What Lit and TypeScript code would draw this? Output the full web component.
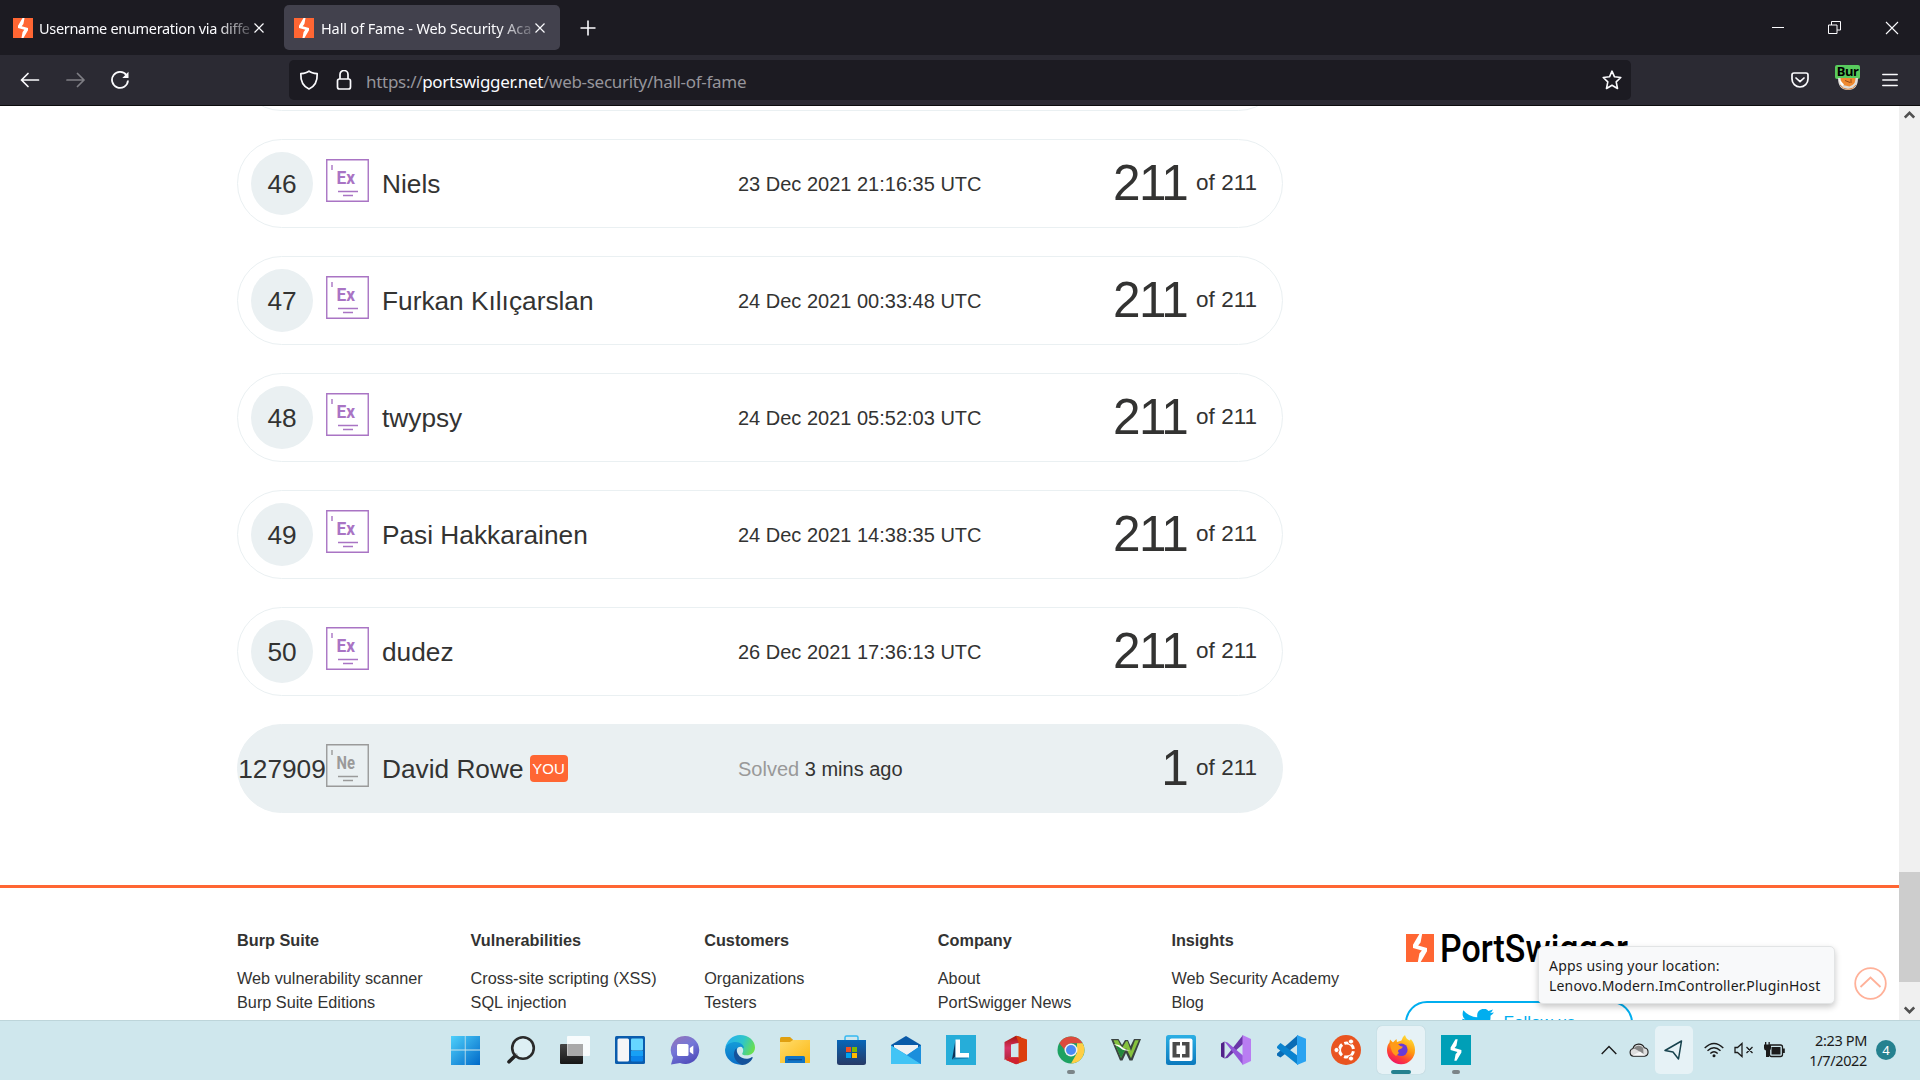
import { LitElement, html, css, svg, nothing } from "lit";
import { customElement, property } from "lit/decorators.js";

interface Entry { rank: string; level: string; name: string; date?: string; ago?: string; score: string; you?: boolean; }

const ENTRIES: Entry[] = [
  { rank: "46", level: "Ex", name: "Niels", date: "23 Dec 2021 21:16:35 UTC", score: "211" },
  { rank: "47", level: "Ex", name: "Furkan Kılıçarslan", date: "24 Dec 2021 00:33:48 UTC", score: "211" },
  { rank: "48", level: "Ex", name: "twypsy", date: "24 Dec 2021 05:52:03 UTC", score: "211" },
  { rank: "49", level: "Ex", name: "Pasi Hakkarainen", date: "24 Dec 2021 14:38:35 UTC", score: "211" },
  { rank: "50", level: "Ex", name: "dudez", date: "26 Dec 2021 17:36:13 UTC", score: "211" },
  { rank: "127909", level: "Ne", name: "David Rowe", ago: "3 mins ago", score: "1", you: true },
];

const FOOTER = [
  { title: "Burp Suite", links: ["Web vulnerability scanner", "Burp Suite Editions"] },
  { title: "Vulnerabilities", links: ["Cross-site scripting (XSS)", "SQL injection"] },
  { title: "Customers", links: ["Organizations", "Testers"] },
  { title: "Company", links: ["About", "PortSwigger News"] },
  { title: "Insights", links: ["Web Security Academy", "Blog"] },
];

// PortSwigger mark on a 30-unit square; inset shrinks the bolt inside the tile
const bolt = (bg: string, size: number, inset = false) => html`<svg width=${size} height=${size} viewBox="0 0 30 30">
  <rect width="30" height="30" fill=${bg}></rect>
  <path transform=${inset ? "translate(4.200 4.200) scale(.72)" : "scale(1)"} d="M14.300 0H17.300L15.600 9 13 12.200 22.500 15V18.500L15.700 30H12.700L14.400 21 17 17.800 7.500 15V11.500Z" fill="#fff"></path></svg>`;

const appIcons = {
  start: svg`<defs><linearGradient id="a" x1="0" y1="0" x2="1" y2="1"><stop offset="0" stop-color="#4fd0fb"/><stop offset="1" stop-color="#0069c8"/></linearGradient></defs>
    <path d="M1 2h13.8v13.6H1zM15.600 2H30v13.600H15.600zM1 16.600h13.800V31H1zM15.600 16.600H30V31H15.600z" transform="translate(0 -1)" fill="url(#a)"/>`,
  search: svg`<path d="M11 20 4 26.800" stroke="#222" stroke-width="3.600" stroke-linecap="round"/><circle cx="18" cy="13" r="10.800" fill="#e3f2f6" fill-opacity=".7" stroke="#2a2a2a" stroke-width="2.600"/>`,
  task: svg`<defs><linearGradient id="a" x1="0" y1="0" x2="0" y2="1"><stop offset="0" stop-color="#454545"/><stop offset="1" stop-color="#161616"/></linearGradient></defs>
    <rect x="0" y="9" width="23" height="20" rx="1" fill="url(#a)"/><rect x="7" y="1" width="23" height="20" rx="1" fill="#fff" fill-opacity=".85"/><rect x="7.500" y="9" width="15.500" height="12" fill="#a9a9a9"/>`,
  widgets: svg`<rect y="1" width="30" height="28" rx="1.500" fill="#0a5cad"/><rect x="2.500" y="3.500" width="11.500" height="23" rx="1.500" fill="#f5f5f7"/><rect x="16" y="3.500" width="12" height="12" rx="1" fill="#66d6ff"/><rect x="16" y="16" width="12" height="5" fill="#17a0f5"/><rect x="16" y="21" width="12" height="5.500" rx="1" fill="#0a84ea"/>`,
  chat: svg`<defs><linearGradient id="a" x1="0" y1="0" x2=".5" y2="1"><stop offset="0" stop-color="#9873b5"/><stop offset=".5" stop-color="#7477d8"/><stop offset="1" stop-color="#5350bd"/></linearGradient></defs>
    <path d="M15 1a14 14 0 1 1-5 27l-9 1.500 2-7A14 14 0 0 1 15 1z" fill="url(#a)"/><rect x="7" y="9" width="11.500" height="12" rx="1.500" fill="#fff"/><path d="M19.800 13l3.500-2.500v9L19.800 17z" fill="#fff"/>`,
  edge: svg`<defs><linearGradient id="a" x1="0" y1=".3" x2="1" y2=".6"><stop offset="0" stop-color="#25aff0"/><stop offset=".55" stop-color="#2fc5c9"/><stop offset="1" stop-color="#6be04a"/></linearGradient><linearGradient id="b" x1="0" y1="0" x2="0" y2="1"><stop offset="0" stop-color="#149bd8"/><stop offset="1" stop-color="#0a6fc8"/></linearGradient></defs>
    <path d="M.3 12.500C2 5 8 0 15 0c9 0 15 6 15 12.500 0 5-4 7.800-8.500 7.800-3 0-5-.8-4-2.300 1.600-2.500.5-6.500-3.500-7.500C9 8.800 3 9.500.3 12.500z" fill="url(#a)"/>
    <path d="M0 15C.5 9 6 7 10.500 7c5 0 8.500 3 8.500 6.500-1.500-2-4-2.500-6-1-3 3-1 10 5 13.500 2 1.200 3 2 2 3C10 32 0 24.500 0 15z" fill="url(#b)"/>
    <path d="M11.500 13c-5 5-2.500 14 5.500 17 5-.2 8.500-3 10.500-6.800.4-1-.2-1.500-.9-1-3 1.800-6.500 2-9.600.6C13.500 21 11.300 17.500 11.500 13z" fill="#14529b"/>`,
  explorer: svg`<path d="M0 3.500Q0 2 1.500 2H10l3 2.700V12H0z" fill="#e0a010"/><defs><linearGradient id="a" x1="0" y1="0" x2="1" y2="1"><stop offset="0" stop-color="#ffdc6b"/><stop offset="1" stop-color="#fcb813"/></linearGradient></defs><path d="M0 7h10l3-2h17v22.500Q30 28 29 28H0z" fill="url(#a)"/><path d="M5 28v-5.500Q5 21 6.500 21h17Q25 21 25 22.500V28z" fill="#1074c6"/><rect x="8" y="24" width="14" height="1.300" fill="#0c4d91"/>`,
  store: svg`<path d="M9 6V2.500Q9 1 10.500 1h10Q22 1 22 2.500V6" fill="none" stroke="#35b9f1" stroke-width="1.500"/><defs><linearGradient id="a" x1="0" y1="0" x2="0" y2="1"><stop offset="0" stop-color="#0766b8"/><stop offset="1" stop-color="#273a66"/></linearGradient></defs><path d="M1 5h29v22.500Q30 30 27.500 30h-24Q1 30 1 27.500z" fill="url(#a)"/><path d="M10 12h5v5h-5z" fill="#f25022"/><path d="M16 12h5v5h-5z" fill="#7fba00"/><path d="M10 18h5v5h-5z" fill="#00a4ef"/><path d="M16 18h5v5h-5z" fill="#ffb900"/>`,
  mail: svg`<path d="M0 10 15 1l15 9v4H0z" fill="#0a5aa8"/><path d="M3 10h24v8L15 22 3 17z" fill="#eff1f4"/><path d="M0 10.500 16 20l14-9.500V29H0z" fill="#27a3e8"/><path d="M0 10.500 30 29H0z" fill="#42c4f5"/><path d="M16 20 30 10.500V29z" fill="#1c8fdc"/>`,
  lenovo: svg`<rect width="30" height="30" fill="#26add9"/><path d="M9.500 5 6 24.500 9.500 22z" fill="#0b3157"/><path d="M6 24.500 9 21.500H22v2z" fill="#157fb0"/><path d="M9.500 4.500H14V18h9v4.500H9.500z" fill="#fff"/>`,
  office: svg`<defs><linearGradient id="a" x1="0" y1="0" x2="0" y2="1"><stop offset="0" stop-color="#a5150c"/><stop offset=".5" stop-color="#d83366"/><stop offset="1" stop-color="#b3283f"/></linearGradient></defs><path d="M3.500 7 15 .8 20 2v5.500l-10 2V22L3.500 25z" fill="url(#a)"/><path d="M15 .8 26 4.500v21L15 29.300 5 25l3-2.500h9.500v-15z" fill="#dc3e0c"/><path d="M4.500 24.800 8 22.300h9.500l.5 6-3 1z" fill="#cf2130"/>`,
  chrome: svg`<circle cx="15" cy="15" r="13.500" fill="#1da262"/><path d="M3.300 8.200A13.500 13.500 0 0 1 26.700 8.300H15Q10 9 8.800 15z" fill="#dc4a3d"/><path d="M26.700 8.300A13.500 13.500 0 0 1 15 28.500L21 18V8.300z" fill="#ffce44"/><circle cx="15" cy="15" r="6.500" fill="#f1f1f1"/><circle cx="15" cy="15" r="5" fill="#4a8af4"/>`,
  w: svg`<path d="M0 4h7.500l3.500 6 3-5h3l2.500 6L23 4h7L21.500 25.500h-3L15 18l-3.500 7.500H9z" fill="#3a4441"/><path d="M2.500 5.300H7l4 8 4-7h1.500L20 16l4-10.700h3.800L20 23.300 15 13l-5 10z" fill="#86c23e"/><path d="M5 11q5 .5 7.500 3.500L14 15l-4 8z" fill="#22883e"/><path d="M2.500 9.300q6 .2 8.500 2.700t8.500 3.500q-7 .5-9.500-2T2.500 9.300z" fill="#fff"/>`,
  brackets: svg`<defs><linearGradient id="a" x1="0" y1="0" x2="0" y2="1"><stop offset="0" stop-color="#2cafe4"/><stop offset="1" stop-color="#0b79bd"/></linearGradient></defs><rect width="30" height="30" rx="2.500" fill="url(#a)"/><rect x="3.500" y="3.500" width="23" height="22.500" rx="2" fill="#fff"/><path d="M6.500 7H14v3.500h-3.500v8.500H14v3.500H6.500zM23.500 7H16v3.500h3.500v8.500H16v3.500h7.500z" fill="#4a4a4a"/>`,
  vs: svg`<path d="M0 8.500 3.500 6.500v17L0 21.500z" fill="#52218a"/><path d="M3.500 23.500 22 0v9L6.500 23z" fill="#6a35a8"/><path d="M3.500 6.500 6.500 7.500 22 20.500V30z" fill="#9256d8"/><path d="M21.500 0 30 4v22l-8.500 4z" fill="#b97df2"/>`,
  code: svg`<path d="M1 18.500 22 0v9L4.500 22.500 1 20.500z" fill="#0a6cb5"/><path d="M1 11.500 4.500 8 22 21v9L1 13z" fill="#0a83cf"/><path d="M21 0l9 3.800v22.400L21 30z" fill="#2aa3f1"/>`,
  ubuntu: svg`<circle cx="15" cy="15" r="15" fill="#e95420"/><circle cx="15.500" cy="15" r="7" fill="none" stroke="#fff" stroke-width="3" stroke-dasharray="12.200 2.460" stroke-dashoffset="-1.200"/><g fill="#fff" stroke="#e95420"><circle cx="5.500" cy="15" r="2.600"/><circle cx="20" cy="6.500" r="2.600"/><circle cx="20" cy="23.500" r="2.600"/></g>`,
  firefox: svg`<defs><linearGradient id="a" x1=".8" y1="0" x2=".3" y2="1"><stop offset="0" stop-color="#ffe63c"/><stop offset=".45" stop-color="#ff980e"/><stop offset=".75" stop-color="#ff4036"/><stop offset="1" stop-color="#ed1267"/></linearGradient></defs><path d="M15.500 5.500Q16 2 19 0q1 4 4.500 5.500 1-.5 1.300-1.500 4.200 5 4.200 11a14 14 0 0 1-28 .5Q1 10 3.500 7.500L4 4.500 7 7.500Q9 5 10.500 4l.5 3z" fill="url(#a)"/><circle cx="15.300" cy="14.700" r="6.300" fill="#6a3ad6"/><path d="M4 9Q9 6 12.500 9.500q1 2 4.500 2.300-1 2.200-4 2.700-2 1.500 0 3.500l-3 3Q5 18 4 9z" fill="#ff9a1a"/>`,
};

const APPS: { key: keyof typeof appIcons | "burp"; state?: string }[] = [
  { key: "start" }, { key: "search" }, { key: "task" }, { key: "widgets" }, { key: "chat" }, { key: "edge" }, { key: "explorer" },
  { key: "store" }, { key: "mail" }, { key: "lenovo" }, { key: "office" }, { key: "chrome", state: "open" }, { key: "w" }, { key: "brackets" },
  { key: "vs" }, { key: "code" }, { key: "ubuntu" }, { key: "firefox", state: "active" }, { key: "burp", state: "open" },
];

// Each icon lives in its own shadow root, so gradient ids stay local to it.
@customElement("app-icon")
class AppIcon extends LitElement {
  @property() name = "start";
  static styles = css`:host { display: block; width: 30px; height: 30px; } svg { display: block; overflow: visible; }`;
  render() {
    if (this.name === "burp") return bolt("#009fb7", 30, true);
    return html`<svg width="30" height="30" viewBox="0 0 30 30">${appIcons[this.name as keyof typeof appIcons]}</svg>`;
  }
}

@customElement("browser-chrome")
class BrowserChrome extends LitElement {
  static styles = css`
    :host { display: block; font-family: "Noto Sans", "Open Sans", sans-serif; color: #fbfbfe; }
    svg { display: block; flex: none; fill: none; stroke: #fbfbfe; }
    .fav svg { stroke: none; }
    .tabs { display: flex; align-items: center; height: 55px; background: #1c1b22; padding-left: 1px; }
    .tab { box-sizing: border-box; display: flex; align-items: center; width: 276px; height: 45px; padding-left: 12px; border-radius: 5px; margin-right: 7px; }
    .tab.active { background: #42414d; margin-right: 20px; padding-left: 10px; }
    .title { width: 212px; margin-left: 6px; font-size: 14.5px; letter-spacing: -.32px; line-height: 20px; white-space: nowrap; overflow: hidden; -webkit-mask-image: linear-gradient(90deg, #000 84%, transparent 104%); mask-image: linear-gradient(90deg, #000 84%, transparent 104%); }
    .active .title { letter-spacing: -.12px; margin-left: 7px; width: 211px; }
    .tab .x { margin-left: 3px; }
    .win { display: flex; margin-left: auto; gap: 44px; padding-right: 21px; align-items: center; }
    .nav { box-sizing: border-box; display: flex; align-items: center; height: 51px; background: #2b2a33; border-bottom: 1px solid #0c0c0d; padding-left: 20px; }
    .back { margin-right: 26px; } .fwd { margin-right: 25px; opacity: .4; }
    .url { box-sizing: border-box; display: flex; align-items: center; width: 1342px; height: 40px; margin-left: 160px; border-radius: 5px; background: #1c1b22; padding: 0 9px 0 10px; }
    .lock { margin: 0 14px 0 17px; }
    .addr { font-size: 17px; letter-spacing: -.3px; color: #96959b; line-height: 24px; padding-top: 4px; }
    .addr b { font-weight: 400; color: #fbfbfe; }
    .star { margin-left: auto; }
    .tools { display: flex; align-items: center; margin-left: auto; padding-right: 22px; }
    .ext { display: flex; flex-direction: column; align-items: center; margin: -5px 22px 0 26px; width: 25px; }
    .ext span { width: 25px; height: 14px; border-radius: 2px; background: #58cb5d; color: #000; font: 700 13px/13px "Noto Sans", sans-serif; text-align: center; letter-spacing: -.5px; }
    .ext svg { margin-top: -1px; stroke: none; }
  `;
  private tab(title: string, active: boolean) {
    return html`<div class="tab ${active ? "active" : ""}"><span class="fav">${bolt("#ff6633", 20)}</span><span class="title">${title}</span>
      <svg class="x" width="10" height="10" viewBox="0 0 10 10" stroke-width="1.200"><path d="M.5.5l9 9M9.500.5l-9 9"/></svg></div>`;
  }
  render() {
    return html`
      <div class="tabs">
        ${this.tab("Username enumeration via different responses", false)}${this.tab("Hall of Fame - Web Security Academy", true)}
        <svg width="16" height="16" viewBox="0 0 16 16" stroke-width="1.600"><path d="M8 .5v15M.5 8h15"/></svg>
        <div class="win">
          <svg width="12" height="12" viewBox="0 0 12 12"><path d="M0 5.500h12"/></svg>
          <svg width="13" height="13" viewBox="0 0 13 13"><path d="M.5 4h8.500v8.500H.5zM3.500 4V.5h9V9H9"/></svg>
          <svg width="14" height="14" viewBox="0 0 14 14" stroke-width="1.100"><path d="M1 1l12 12M13 1L1 13"/></svg>
        </div>
      </div>
      <div class="nav">
        <svg class="back" width="20" height="16" viewBox="0 0 20 16" stroke-width="1.700" stroke-linecap="round" stroke-linejoin="round"><path d="M18.500 8H1.500M8 1.500L1.500 8 8 14.500"/></svg>
        <svg class="fwd" width="20" height="16" viewBox="0 0 20 16" stroke-width="1.700" stroke-linecap="round" stroke-linejoin="round"><path d="M1 8h17M11.500 1.500L18 8l-6.500 6.500"/></svg>
        <svg width="18" height="18" viewBox="0 0 18 18" stroke-width="1.800"><path d="M15.500 4.200A8 8 0 1 0 17 9.500"/><path d="M17.500.8V7h-6.200z" fill="#fbfbfe" stroke="none"/></svg>
        <div class="url">
          <svg width="20" height="20" viewBox="0 0 20 20" stroke-width="1.700" stroke-linejoin="round"><path d="M10 1.200C8 3 5 3.500 1.800 3.700 1.500 11 3.500 16 10 19 16.500 16 18.500 11 18.200 3.700 15 3.500 12 3 10 1.200z"/></svg>
          <svg class="lock" width="16" height="20" viewBox="0 0 16 20" stroke-width="1.700"><rect x="1.500" y="9" width="13" height="10" rx="2"/><path d="M4 9V4.500a4 4 0 0 1 8 0V9"/></svg>
          <span class="addr">https://<b>portswigger.net</b>/web-security/hall-of-fame</span>
          <svg class="star" width="20" height="20" viewBox="0 0 20 20" stroke-width="1.600" stroke-linejoin="round"><path d="M10 1.200l2.500 5.600 6.300.7-4.600 4.300 1.300 6.700L10 15.200l-5.500 3.300 1.300-6.700L1.200 7.500l6.300-.7z"/></svg>
        </div>
        <div class="tools">
          <svg width="18" height="16" viewBox="0 0 18 16" stroke-width="1.700" stroke-linecap="round" stroke-linejoin="round"><path d="M3 1h12q2 0 2 2v4a8 8 0 0 1-16 0V3q0-2 2-2z"/><path d="M5 6l4 3.700L13 6"/></svg>
          <div class="ext"><span>Bur</span><svg width="20" height="12" viewBox="0 0 20 12"><path d="M0 0h20q0 12-10 12T0 0z" fill="#e0dcd8"/><path d="M2.500 0h15q0 5-3 7l-3 1.500L5 7q-2-2-2.500-7z" fill="#f08a30"/><path d="M1 1l5 5.500L4.500 8Q2 6 1 1z" fill="#fff"/><path d="M7 2.500l5 2M13 1v4" stroke="#994b16"/><path d="M2 7q3 4.300 8 4.300T18 7" fill="none" stroke="#d98642"/></svg></div>
          <svg width="16" height="14" viewBox="0 0 16 14" stroke-width="1.500" stroke-linecap="round"><path d="M.8 1.500h14.400M.8 7h14.400M.8 12.500h14.400"/></svg>
        </div>
      </div>`;
  }
}

@customElement("hall-page")
class HallPage extends LitElement {
  static styles = css`
    :host { display: flex; height: 914px; overflow: hidden; background: #fff; color: #333332; font-family: "Liberation Sans", Arial, sans-serif; }
    svg { display: block; flex: none; }
    .page { width: 1899px; overflow: hidden; }
    .list { display: flex; flex-direction: column; gap: 28px; width: 1046px; margin: -84px 0 72px 237px; }
    .card { box-sizing: border-box; display: flex; align-items: center; height: 89px; flex: none; border: 1px solid #eaf0f2; border-radius: 45px; padding: 0 25px 0 13px; }
    .card.you { background: #eaf0f2; }
    .rank { box-sizing: border-box; display: flex; align-items: center; justify-content: center; flex: none; width: 62px; height: 63px; padding-top: 1px; border-radius: 50%; background: #eaf0f2; font-size: 26.250px; white-space: nowrap; }
    .level { margin: 0 13px 6px 13px; }
    .level text { font: 700 17.500px Roboto, sans-serif; }
    .name { display: flex; align-items: center; width: 356px; flex: none; font-size: 26.250px; white-space: nowrap; padding-top: 1px; }
    .pill { width: 38px; height: 27px; border-radius: 4px; margin: -1px 0 0 6px; background: #ff6633; color: #fff; font-size: 15px; line-height: 28px; text-align: center; }
    .date { font-size: 20px; white-space: nowrap; padding-top: 1px; }
    .date i { font-style: normal; color: #999; }
    .score { display: flex; align-items: center; margin-left: auto; font-size: 22.500px; margin-top: -2px; white-space: nowrap; }
    .score b { font-weight: 400; font-size: 49.500px; margin-right: 9px; letter-spacing: -1.600px; line-height: 60px; }
    footer { display: grid; grid-template-columns: repeat(5, 233.600px) 1fr; border-top: 3px solid #ff6633; padding: 40px 0 0 237px; font-size: 16.250px; line-height: 24px; }
    h4 { margin: 0 0 14px; font-size: 16.250px; line-height: 24px; }
    .brand { display: flex; flex-direction: column; align-items: flex-start; padding: 6px 0 0 1px; }
    .logo { display: flex; height: 28px; }
    .logo svg { overflow: visible; }
    .logo svg + svg { margin-left: 7px; }
    .logo text { font: 500 38px Roboto, sans-serif; fill: #000; }
    .follow { box-sizing: border-box; display: flex; justify-content: center; width: 228px; height: 44px; margin: 39px 0 0 -1px; border: 2px solid #00aeef; border-radius: 22px; gap: 10px; color: #00aeef; font-size: 17px; line-height: 22px; padding: 6px 2px 0 0; }
    .follow span { padding-top: 3px; }
    .bar { display: flex; flex-direction: column; width: 21px; background: #f0f0f0; align-items: center; }
    .up { margin-top: 4px; }
    .thumb { width: 21px; height: 110px; background: #cdcdcd; margin-top: 752px; }
    .down { margin-top: 23px; }
  `;
  private row(e: Entry) {
    const color = e.you ? "#9a9a9a" : "#a974c4";
    return html`<div class="card ${e.you ? "you" : ""}">
      <div class="rank">${e.rank}</div>
      <svg class="level" width="43" height="43" viewBox="0 0 43 43">
        <path d="M.75 .75h41.500v41.500h-41.500z" fill="none" stroke=${color} stroke-width="1.400"></path>
        <path d="M12 32.500h20M17 36.500h10M6 6v5" stroke=${color} stroke-width="1.400" fill="none"></path>
        <text x="10.500" y="25" textLength="18.500" lengthAdjust="spacingAndGlyphs" fill=${color}>${e.level}</text>
      </svg>
      <div class="name">${e.name}${e.you ? html`<span class="pill">YOU</span>` : nothing}</div>
      <div class="date">${e.you ? html`<i>Solved</i> ${e.ago}` : e.date}</div>
      <div class="score"><b>${e.score}</b>of 211</div>
    </div>`;
  }
  render() {
    return html`
      <div class="page">
        <div class="list"><div class="card"></div>${ENTRIES.map((e) => this.row(e))}</div>
        <footer>
          ${FOOTER.map((c) => html`<div><h4>${c.title}</h4>${c.links.map((l) => html`<div>${l}</div>`)}</div>`)}
          <div class="brand">
            <div class="logo">${bolt("#ff6633", 28)}<svg width="190" height="28"><text x="-1" y="27.500" textLength="188" lengthAdjust="spacingAndGlyphs">PortSwigger</text></svg></div>
            <div class="follow">
              <svg width="33" height="27" viewBox="0 0 33 27"><path d="M33 3.500q-1.500 2-3.500 3.300C30 19 21 27 10.500 27 6.500 27 3 26 0 24q5.500.5 9.800-2.800-4.600-.3-6.200-4.700h2.900Q1.600 15 1.300 9.800l3 .8Q.2 7.500 2.300 1.300 8 8 16.300 8.300 15.500 3 19 1q5-3 8.500 1L32 .5Q31 2.800 29 4z" fill="#00aeef"/></svg>
              <span>Follow us</span>
            </div>
          </div>
        </footer>
      </div>
      <div class="bar">
        <svg class="up" width="11" height="10" viewBox="0 0 11 10" fill="none" stroke="#505050" stroke-width="2.600"><path d="M.8 7.500l4.700-4.700 4.700 4.700"/></svg>
        <div class="thumb"></div>
        <svg class="down" width="11" height="10" viewBox="0 0 11 10" fill="none" stroke="#505050" stroke-width="2.600"><path d="M.8 2.500l4.700 4.700 4.700-4.700"/></svg>
      </div>`;
  }
}

@customElement("task-bar")
class TaskBar extends LitElement {
  static styles = css`
    :host { box-sizing: border-box; display: grid; grid-template-columns: 441px 1fr auto; height: 60px; background: #cfe7ed; border-top: 1px solid #bdd5da; padding-bottom: 1px; font-family: "Noto Sans", "Open Sans", sans-serif; color: #1b1b1b; }
    svg { display: block; flex: none; }
    .apps { grid-column: 2; display: flex; align-items: center; gap: 7.080px; }
    .app { box-sizing: border-box; display: flex; flex-direction: column; align-items: center; justify-content: space-between; width: 48px; height: 48px; padding-top: 9px; border-radius: 5px; flex: none; }
    .app.active { background: #e6f2f6; box-shadow: 0 0 1px #9fb9c0; }
    .mark { width: 8px; height: 4px; border-radius: 2px; }
    .open .mark { background: #7b8588; }
    .active .mark { width: 20px; background: #25818f; }
    .tray { display: flex; align-items: center; padding-right: 24px; }
    .loc { display: flex; align-items: center; justify-content: center; width: 38px; height: 48px; border-radius: 5px; background: #e6f2f6; margin: 0 11px 0 6px; }
    .loc svg { margin-right: 2px; }
    .cloud, .vol, .power { margin-left: 10px; }
    .cloud { margin-left: 12px; }
    .clock { width: 82px; text-align: right; font-size: 14.500px; line-height: 20px; letter-spacing: -.35px; }
    .count { width: 20px; height: 20px; border-radius: 50%; background: #25818f; color: #fff; font-size: 13px; line-height: 20px; text-align: center; margin-left: 9px; }
  `;
  render() {
    return html`
      <div class="apps">${APPS.map((a) => html`<div class="app ${a.state ?? ""}"><app-icon name=${a.key}></app-icon><div class="mark"></div></div>`)}</div>
      <div class="tray">
        <svg width="16" height="10" viewBox="0 0 16 10" fill="none" stroke="#1b1b1b" stroke-width="1.400"><path d="M.7 9L8 1.500 15.300 9"/></svg>
        <svg class="cloud" width="20" height="14" viewBox="0 0 20 14"><path d="M4.500 13.300a4 4 0 0 1-.5-7.800 6 6 0 0 1 11.300-.7 4.300 4.300 0 0 1 .2 8.500z" fill="#dedede" stroke="#1f1f1f" stroke-width="1.100"/><path d="M1.500 7Q4 4.600 8 7l6.500 4-.3-6A6 6 0 0 0 4.500 5.500z" fill="#858585"/><path d="M3.500 12.500L11 8.500l5 4z" fill="#f7f7f7"/></svg>
        <div class="loc"><svg width="19" height="20" viewBox="0 0 19 20" fill="none" stroke="#16424d" stroke-width="1.500" stroke-linejoin="round"><path d="M17.500 1L1 10.500l8 1.500 5.500 7z"/></svg></div>
        <svg width="20" height="16" viewBox="0 0 20 16" fill="none" stroke="#1b1b1b" stroke-width="1.400"><path d="M.7 6Q10-3 19.300 6M3.500 8.800q6.500-6.300 13 0M6.300 11.500q3.700-3.500 7.400 0"/><circle cx="10" cy="13.700" r="1.500" fill="#1b1b1b" stroke="none"/></svg>
        <svg class="vol" width="20" height="16" viewBox="0 0 20 16" fill="none" stroke="#1b1b1b" stroke-width="1.300"><path d="M1 5.500h2.500L8 1.500v13l-4.500-4H1zM12.500 5l6 6M18.500 5l-6 6"/></svg>
        <svg class="power" width="21" height="16" viewBox="0 0 21 16"><rect x="5.500" y="3" width="13" height="11.500" rx="2" fill="none" stroke="#1b1b1b" stroke-width="1.300"/><rect x="7.500" y="5" width="9" height="7.500" fill="#1b1b1b"/><path d="M19 6.500h1.800v4.500H19z" fill="#1b1b1b"/><path d="M0 2.500h7V6q0 2-2 2.500V15H2V8.500Q0 8 0 6zM1 0h1.300v3H1zM4.500 0h1.300v3H4.500z" fill="#1b1b1b"/></svg>
        <div class="clock">2:23 PM<br>1/7/2022</div>
        <div class="count">4</div>
      </div>`;
  }
}

@customElement("app-root")
class AppRoot extends LitElement {
  static styles = css`
    :host { display: block; position: relative; width: 1920px; height: 1080px; overflow: hidden; }
    .top { position: absolute; left: 1854px; top: 967px; }
    .tip { position: absolute; left: 1538px; top: 946px; box-sizing: border-box; width: 297px; height: 58px; padding: 9px 0 0 10px; background: #f8f9fa; border: 1px solid #e2e4e5; border-radius: 5px; box-shadow: 0 3px 6px rgba(0, 0, 0, .22); font: 14px/20px "Noto Sans", "Open Sans", sans-serif; letter-spacing: .18px; color: #1b1b1b; white-space: nowrap; }
  `;
  render() {
    return html`<browser-chrome></browser-chrome><hall-page></hall-page><task-bar></task-bar>
      <svg class="top" width="33" height="33" viewBox="0 0 33 33" fill="none" stroke="#ffb199" stroke-width="1.800"><circle cx="16.500" cy="16.500" r="15.300"/><path d="M6.500 20L16.500 10.500l10 9.500"/></svg>
      <div class="tip">Apps using your location:<br>Lenovo.Modern.ImController.PluginHost</div>`;
  }
}
